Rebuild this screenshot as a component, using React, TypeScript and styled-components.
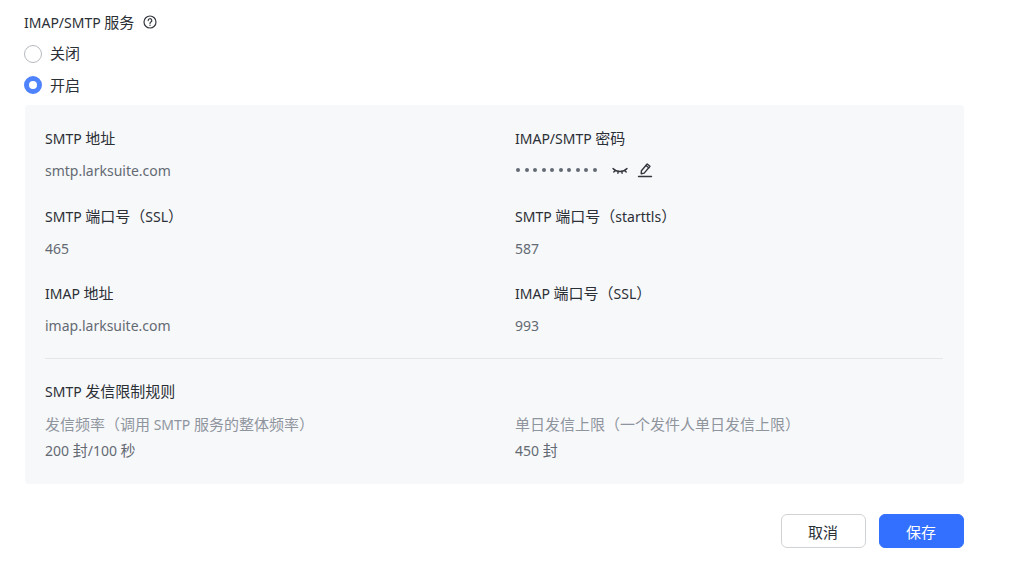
import React from "react";
import styled, { createGlobalStyle } from "styled-components";

const GlobalStyle = createGlobalStyle`
  html, body { margin: 0; padding: 0; background: #fff; }
  body {
    font-family: "Noto Sans", "Noto Sans CJK SC", sans-serif;
    font-size: 14px;
    color: #2b2f36;
  }
`;

const Page = styled.div`
  width: 1024px;
  height: 570px;
  overflow: hidden;
  box-sizing: border-box;
  padding: 11px 60.5px 0 24px;
`;

// CJK runs sit one pixel bigger than the latin text around them
const Cjk = styled.span`
  font-size: 15px;
`;

const Mixed = ({ children }: { children: string }) => (
  <span>
    {children.split(/([\u3000-\u9fff\uff00-\uffef]+)/).map((part, i) =>
      i % 2 ? <Cjk key={i}>{part}</Cjk> : part
    )}
  </span>
);

const TitleRow = styled.div`
  display: flex;
  align-items: center;
  gap: 9px;
  height: 22px;
  line-height: 22px;
`;

const RadioRow = styled.label`
  display: flex;
  align-items: center;
  gap: 8px;
  height: 22px;
  line-height: 22px;
  margin-top: 9.5px;
`;

const RadioMark = styled.span<{ $on?: boolean }>`
  width: 18px;
  height: 18px;
  box-sizing: border-box;
  border-radius: 50%;
  background: #fff;
  border: ${(p) => (p.$on ? "5px solid #4e83fd" : "1.5px solid #b6babf")};
`;

const Panel = styled.div`
  margin: 9px 0 0 0.5px;
  height: 379px;
  box-sizing: border-box;
  padding: 22px 20.5px 0;
  background: #f7f8fa;
  border-radius: 4px;
`;

const Grid = styled.div`
  display: grid;
  grid-template-columns: 470px 1fr;
  grid-auto-rows: 77.5px;
`;

const Field = styled.div`
  display: flex;
  flex-direction: column;
  gap: 10px;
`;

const Label = styled.div`
  line-height: 22px;
`;

const Value = styled.div`
  line-height: 22px;
  color: #646a73;
  display: flex;
  align-items: center;
`;

const SecretValue = styled(Value)`
  height: 20px;
`;

const Dots = styled.span`
  display: flex;
  gap: 4.5px;
  margin: 0 15px 0 1px;
`;

const Dot = styled.i`
  width: 4px;
  height: 4px;
  border-radius: 50%;
  background: #646a73;
`;

const IconButton = styled.span`
  display: flex;
  margin-right: 9px;
`;

const Divider = styled.div`
  height: 1px;
  background: #e4e6e9;
  margin-top: -2px;
  margin-bottom: 21px;
`;

const RuleTitle = styled(Label)`
  margin-bottom: 10px;
`;

const RuleGrid = styled.div`
  display: grid;
  grid-template-columns: 470px 1fr;
`;

const RuleField = styled.div`
  display: flex;
  flex-direction: column;
  gap: 3px;
`;

const RuleLabel = styled.div`
  line-height: 22px;
  color: #8f959e;
`;

const Footer = styled.div`
  display: flex;
  justify-content: flex-end;
  gap: 13px;
  margin-top: 30px;
`;

const Button = styled.button<{ $primary?: boolean }>`
  width: 85px;
  height: 34px;
  box-sizing: border-box;
  border-radius: 6px;
  font: inherit;
  font-size: 15px;
  color: ${(p) => (p.$primary ? "#fff" : "#2b2f36")};
  background: ${(p) => (p.$primary ? "#3370ff" : "#fff")};
  border: 1px solid ${(p) => (p.$primary ? "#3370ff" : "#d0d3d6")};
`;

const HelpIcon = () => (
  <svg width="14" height="14" viewBox="0 0 14 14" fill="none" stroke="#33373d" strokeWidth="1.2" strokeLinecap="round">
    <circle cx="7" cy="7" r="6" />
    <path d="M5.2 5.6a1.8 1.8 0 1 1 2.7 1.5c-.6.35-.9.7-.9 1.3" />
    <path d="M7 10.2v.1" strokeWidth="1.4" />
  </svg>
);

const EyeClosedIcon = () => (
  <svg width="16" height="16" viewBox="0 0 16 16" fill="none" stroke="#33373d" strokeWidth="1.4" strokeLinecap="round">
    <path d="M1 6.5c2 2.2 4.2 3 7 3s5-.8 7-3" />
    <path d="M3.4 8.4 1.8 10M6.4 9.4 5.8 11.2M9.6 9.4l.6 1.8M12.6 8.4l1.6 1.6" />
  </svg>
);

const EditIcon = () => (
  <svg width="16" height="16" viewBox="0 0 16 16" fill="none" stroke="#33373d" strokeWidth="1.4" strokeLinejoin="round" strokeLinecap="round">
    <path d="M4.4 8.8 10.2 2l2.8 2.3-5.8 6.8-3 .6z" />
    <path d="M9 3.5l2.8 2.3" />
    <path d="M1.5 14.5h13" />
  </svg>
);

export default function App() {
  return (
    <Page>
      <GlobalStyle />
      <TitleRow>
        <Mixed>IMAP/SMTP 服务</Mixed>
        <HelpIcon />
      </TitleRow>
      <RadioRow>
        <RadioMark />
        <Mixed>关闭</Mixed>
      </RadioRow>
      <RadioRow>
        <RadioMark $on />
        <Mixed>开启</Mixed>
      </RadioRow>
      <Panel>
        <Grid>
          <Field>
            <Label><Mixed>SMTP 地址</Mixed></Label>
            <Value>smtp.larksuite.com</Value>
          </Field>
          <Field>
            <Label><Mixed>IMAP/SMTP 密码</Mixed></Label>
            <SecretValue>
              <Dots>
                {Array.from({ length: 10 }).map((_, i) => (
                  <Dot key={i} />
                ))}
              </Dots>
              <IconButton><EyeClosedIcon /></IconButton>
              <IconButton><EditIcon /></IconButton>
            </SecretValue>
          </Field>
          <Field>
            <Label><Mixed>SMTP 端口号（SSL）</Mixed></Label>
            <Value>465</Value>
          </Field>
          <Field>
            <Label><Mixed>SMTP 端口号（starttls）</Mixed></Label>
            <Value>587</Value>
          </Field>
          <Field>
            <Label><Mixed>IMAP 地址</Mixed></Label>
            <Value>imap.larksuite.com</Value>
          </Field>
          <Field>
            <Label><Mixed>IMAP 端口号（SSL）</Mixed></Label>
            <Value>993</Value>
          </Field>
        </Grid>
        <Divider />
        <RuleTitle><Mixed>SMTP 发信限制规则</Mixed></RuleTitle>
        <RuleGrid>
          <RuleField>
            <RuleLabel><Mixed>发信频率（调用 SMTP 服务的整体频率）</Mixed></RuleLabel>
            <Value><Mixed>200 封/100 秒</Mixed></Value>
          </RuleField>
          <RuleField>
            <RuleLabel><Mixed>单日发信上限（一个发件人单日发信上限）</Mixed></RuleLabel>
            <Value><Mixed>450 封</Mixed></Value>
          </RuleField>
        </RuleGrid>
      </Panel>
      <Footer>
        <Button>取消</Button>
        <Button $primary>保存</Button>
      </Footer>
    </Page>
  );
}
